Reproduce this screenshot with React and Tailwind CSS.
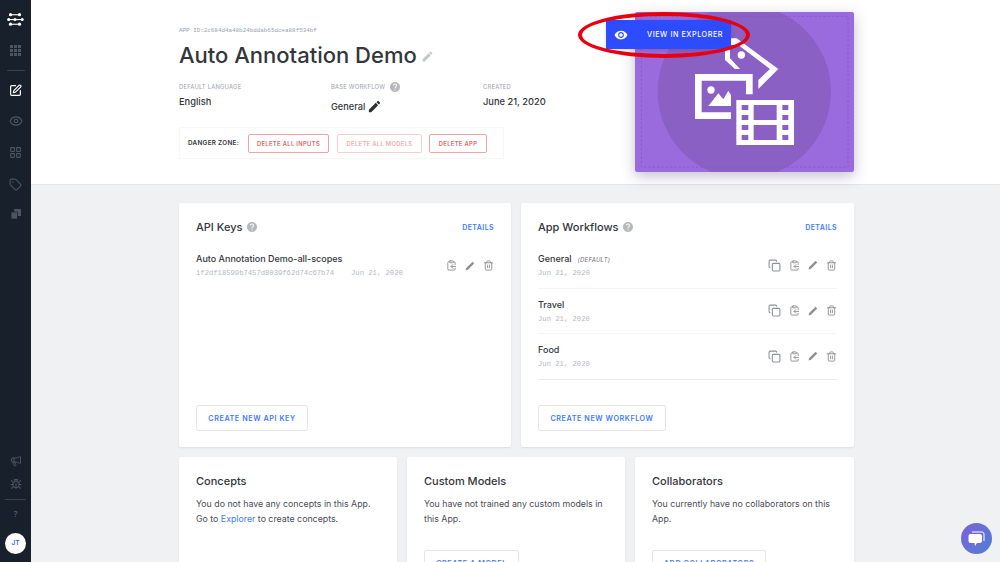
import { Bug, Copy, ClipboardCopy, Eye, LayoutGrid, Megaphone, SquarePen, Tag, Trash2 } from "lucide-react";
import { MdEdit, MdHelp, MdRemoveRedEye } from "react-icons/md";

const sans = { fontFamily: "Inter, 'Liberation Sans', sans-serif" };
const mono = { fontFamily: "'Liberation Mono', monospace" };

const Logo = () => (
  <svg width="17" height="13" viewBox="0 0 17 13" fill="white" className="mb-[19px] mt-[13px]">
    <rect x="3.5" y="1.2" width="9" height="1.1" />
    <circle cx="3.5" cy="1.7" r="1.6" />
    <circle cx="12.5" cy="1.7" r="1.6" />
    <rect x="1.5" y="6" width="14" height="1.1" />
    <circle cx="1.7" cy="6.5" r="1.6" />
    <circle cx="8" cy="6.5" r="1.6" />
    <circle cx="15.2" cy="6.5" r="1.5" />
    <rect x="3.5" y="10.7" width="9" height="1.1" />
    <circle cx="3.5" cy="11.2" r="1.6" />
    <circle cx="12.5" cy="11.2" r="1.6" />
  </svg>
);

const GridFilled = () => (
  <svg width="11" height="11" viewBox="0 0 11 11" fill="#4d5560">
    {[0, 4, 8].map((y) =>
      [0, 4, 8].map((x) => <rect key={`${x}-${y}`} x={x} y={y} width="3" height="3" />)
    )}
  </svg>
);

const Stack = () => (
  <svg width="10" height="10" viewBox="0 0 10 10" fill="#4d5560">
    <rect x="3" y="0" width="7" height="7" rx="0.5" />
    <rect x="0" y="3" width="6.5" height="7" rx="0.5" stroke="#18202b" strokeWidth="0.8" />
  </svg>
);

const Sidebar = () => (
  <aside className="flex h-[562px] w-[31px] shrink-0 flex-col items-center bg-[#18202b]">
    <Logo />
    <GridFilled />
    <div className="mb-[13px] mt-[14px] h-px w-[18px] bg-[#3a424d]" />
    <SquarePen size={13} color="#ffffff" strokeWidth={2.2} className="mb-[17px]" />
    <Eye size={14} color="#4d5560" className="mb-[18px]" />
    <LayoutGrid size={13} color="#4d5560" className="mb-[19px]" />
    <Tag size={13} color="#4d5560" className="mb-[18px]" />
    <Stack />
    <div className="flex-1" />
    <Megaphone size={12} color="#4d5560" className="mb-[11px]" />
    <Bug size={12} color="#4d5560" className="mb-[9px]" />
    <div className="h-px w-[21px] bg-[#3a424d]" />
    <span className="mb-[14px] mt-[9px] text-[8px] leading-[10px] text-[#5f6771]" style={sans}>?</span>
    <div className="mb-[8px] flex h-[21px] w-[21px] items-center justify-center rounded-full bg-white text-[6.5px] font-semibold text-[#2f6bff]" style={sans}>
      JT
    </div>
  </aside>
);

const Label = ({ children }) => (
  <span className="text-[5.8px] uppercase leading-[8px] tracking-[0.04em] text-[#9aa1ad]">{children}</span>
);

const DangerButton = ({ children, faded, width }) => (
  <button className={`flex h-[19px] items-center justify-center rounded-[2px] border pt-[2px] text-[5.8px] font-semibold uppercase tracking-[0.06em] ${width} ${faded ? "border-[#f4cfcf] text-[#efb0b0]" : "border-[#eca5a5] text-[#df6468]"}`}>
    {children}
  </button>
);

const Thumbnail = () => (
  <div className="relative mt-[12px] h-[160px] w-[219px] overflow-hidden rounded-[2px] bg-[#9a6bdd] shadow-[0_4px_14px_rgba(60,40,100,0.3)]">
    <svg viewBox="195 36 657 480" className="h-full w-full">
      <circle cx="523" cy="275" r="260" fill="#8a60c5" />
      <rect x="214" y="49" width="620" height="452" fill="none" stroke="#7f58b8" strokeWidth="2" strokeDasharray="7 6" />
      <path d="M480 115 H500 L625 207 L565 267 V240 L600 207 L505 135 H480 V175 L510 207 H495 L465 180 V130 Z" fill="white" />
      <circle cx="514" cy="165" r="11" fill="white" />
      <path d="M375 222 H548 V283 H528 V242 H395 V337 H483 V357 H375 Z" fill="white" />
      <path d="M415 318 L445 280 L460 298 L475 272 L483 285 V318 Z" fill="white" />
      <circle cx="423" cy="270" r="11" fill="white" />
      <path d="M499 300 H672 V435 H499 Z" fill="white" />
      {[315, 345, 375, 405].map((y) => (
        <g key={y} fill="#8a60c5">
          <rect x="515" y={y} width="20" height="15" />
          <rect x="637" y={y} width="18" height="15" />
        </g>
      ))}
      <rect x="551" y="315" width="69" height="45" fill="#8a60c5" />
      <rect x="551" y="375" width="69" height="45" fill="#8a60c5" />
    </svg>
  </div>
);

const Header = () => (
  <header className="relative flex h-[185px] shrink-0 border-b border-[#e4e5e8] bg-white pl-[148px]">
    <div className="flex w-[456px] flex-col items-start pt-[27px]">
      <span className="text-[5.9px] leading-[8px] text-[#9aa1ad]" style={mono}>
        APP ID:2c684d4a48b24bddab65dcea88f534bf
      </span>
      <div className="mt-[5px] flex items-center gap-[4px]">
        <h1 className="text-[22px] font-medium leading-[30px] text-[#33363c]">Auto Annotation Demo</h1>
        <MdEdit size={13} color="#c4c6c9" className="mt-[3px]" />
      </div>
      <div className="mt-[13px] flex">
        <div className="flex w-[152px] flex-col gap-[4px]">
          <Label>Default Language</Label>
          <span className="text-[9.3px] font-medium leading-[14px] text-[#33363c]">English</span>
        </div>
        <div className="flex w-[152px] flex-col">
          <div className="flex h-[8px] items-center gap-[4px]">
            <Label>Base Workflow</Label>
            <MdHelp size={12} color="#b5b7bb" />
          </div>
          <div className="mt-[8px] flex items-center gap-[2px]">
            <span className="text-[9.2px] font-medium leading-[14px] text-[#33363c]">General</span>
            <MdEdit size={15} color="#2c2f35" />
          </div>
        </div>
        <div className="flex flex-col gap-[4px]">
          <Label>Created</Label>
          <span className="text-[9.3px] font-medium leading-[14px] text-[#33363c]">June 21, 2020</span>
        </div>
      </div>
      <div className="mt-[13px] flex h-[32px] w-[325px] items-center gap-[8px] border border-[#f7f7f8] pl-[8px]">
        <span className="w-[52px] pt-[2px] text-[6.3px] font-semibold uppercase tracking-[0.05em] text-[#33363c]">Danger Zone:</span>
        <DangerButton width="w-[81px]">Delete All Inputs</DangerButton>
        <DangerButton width="w-[85px]" faded>Delete All Models</DangerButton>
        <DangerButton width="w-[58px] -ml-px">Delete App</DangerButton>
      </div>
    </div>
    <Thumbnail />
    <button className="absolute left-[575px] top-[20px] flex h-[29px] w-[125px] items-center bg-[#2d4bff] text-white shadow-[0_1px_4px_rgba(0,0,0,0.15)]">
      <span className="flex h-full w-[29px] items-center justify-center">
        <MdRemoveRedEye size={14} />
      </span>
      <span className="pl-[12px] pt-[2px] text-[7.2px] font-medium uppercase tracking-[0.08em]">View in Explorer</span>
    </button>
    <div className="absolute left-[547px] top-[12px] h-[46px] w-[172px] rounded-[50%] border-[4px] border-[#e8000f]" />
  </header>
);

const Card = ({ className, children }) => (
  <section className={`rounded-[2px] bg-white shadow-[0_1px_2px_rgba(0,0,0,0.08)] ${className}`}>{children}</section>
);

const CardHead = ({ title }) => (
  <div className="flex items-center justify-between">
    <div className="flex items-center gap-[4px]">
      <h2 className="text-[11px] font-medium leading-[16px] text-[#33363c]">{title}</h2>
      <MdHelp size={12} color="#b5b7bb" />
    </div>
    <a className="pt-[3px] text-[7px] font-semibold uppercase tracking-[0.06em] text-[#3d7bff]">Details</a>
  </div>
);

const OutlineButton = ({ children, width }) => (
  <button className={`flex h-[26px] items-center justify-center rounded-[2px] border border-[#e4e5e8] pt-[2px] text-[7.2px] font-semibold uppercase tracking-[0.08em] text-[#3d7bff] ${width}`}>
    {children}
  </button>
);

const SlimPencil = () => (
  <svg width="10" height="10" viewBox="0 0 10 10" fill="currentColor">
    <path d="M0.5 9.5 L1.2 7 L7.6 0.8 L9.2 2.4 L3 8.8 Z" />
  </svg>
);

const RowIcons = ({ copy }) => (
  <div className="flex items-center gap-[8px] text-[#8f9195]">
    {copy && <Copy size={13} />}
    <ClipboardCopy size={11} />
    <SlimPencil />
    <Trash2 size={11} />
  </div>
);

const Workflow = ({ name, isDefault, last }) => (
  <div className={`flex h-[45.5px] items-center justify-between border-b ${last ? "border-[#e9eaec]" : "border-[#f4f4f5]"}`}>
    <div className="flex flex-col gap-[3px] pt-px">
      <div className="flex items-center gap-[6px]">
        <span className="text-[9px] font-medium leading-[12px] text-[#33363c]">{name}</span>
        {isDefault && <span className="text-[6px] italic uppercase tracking-[0.04em] text-[#6c6f75]">(Default)</span>}
      </div>
      <span className="text-[7.2px] leading-[10px] text-[#b3b8c2]" style={mono}>Jun 21, 2020</span>
    </div>
    <RowIcons copy />
  </div>
);

const InfoCard = ({ title, children, action, actionWidth }) => (
  <Card className="h-[140px] px-[17px] pt-[16px]">
    <h2 className="text-[11px] font-medium leading-[16px] text-[#33363c]">{title}</h2>
    <p className="mt-[7px] h-[54px] text-[8.8px] leading-[15px] text-[#4a4d53]">{children}</p>
    {action && <OutlineButton width={actionWidth}>{action}</OutlineButton>}
  </Card>
);

const Cards = () => (
  <div className="w-[823px] pl-[148px] pt-[18px]">
    <div className="grid grid-cols-[332px_333px] gap-[10px]">
      <Card className="flex h-[244px] flex-col px-[17px] pt-[16px] pb-[16px]">
        <CardHead title="API Keys" />
        <div className="mt-[18px] flex items-center justify-between">
          <div className="flex flex-col gap-[3px]">
            <span className="text-[9px] font-medium leading-[12px] text-[#33363c]">Auto Annotation Demo-all-scopes</span>
            <div className="flex gap-[17px] text-[7.2px] leading-[10px] text-[#b3b8c2]" style={mono}>
              <span>1f2df18599b7457d8039f62d74c67b74</span>
              <span>Jun 21, 2020</span>
            </div>
          </div>
          <RowIcons />
        </div>
        <div className="flex-1" />
        <OutlineButton width="w-[112px]">Create New API Key</OutlineButton>
      </Card>
      <Card className="flex h-[244px] flex-col px-[17px] pt-[16px] pb-[16px]">
        <CardHead title="App Workflows" />
        <div className="mt-[8px] flex flex-col">
          <Workflow name="General" isDefault />
          <Workflow name="Travel" />
          <Workflow name="Food" last />
        </div>
        <div className="flex-1" />
        <OutlineButton width="w-[128px]">Create New Workflow</OutlineButton>
      </Card>
    </div>
    <div className="mt-[10px] grid grid-cols-[218px_218px_219px] gap-[10px]">
      <InfoCard title="Concepts">
        You do not have any concepts in this App. Go to <a className="text-[#3d7bff]">Explorer</a> to create concepts.
      </InfoCard>
      <InfoCard title="Custom Models" action="Create a Model" actionWidth="w-[95px]">
        You have not trained any custom models in this App.
      </InfoCard>
      <InfoCard title="Collaborators" action="Add Collaborators" actionWidth="w-[114px]">
        You currently have no collaborators on this App.
      </InfoCard>
    </div>
  </div>
);

const App = () => (
  <div className="relative flex h-[562px] w-[1000px] overflow-hidden bg-[#f0f1f3]" style={sans}>
    <Sidebar />
    <main className="flex min-w-0 flex-1 flex-col">
      <Header />
      <Cards />
    </main>
    <button className="absolute left-[961px] top-[523px] flex h-[31px] w-[31px] items-center justify-center rounded-full bg-gradient-to-br from-[#7b5fd6] to-[#4a80d6]">
      <svg width="17" height="16" viewBox="0 0 17 16">
        <path d="M4 1 H14 a2 2 0 0 1 2 2 V10" fill="none" stroke="white" strokeWidth="1" />
        <path d="M2.5 3 H12 a2 2 0 0 1 2 2 V10 a2 2 0 0 1 -2 2 H9 L7 15 L6.5 12 H2.5 a2 2 0 0 1 -2 -2 V5 a2 2 0 0 1 2 -2 Z" fill="white" />
      </svg>
    </button>
  </div>
);

export default App;
